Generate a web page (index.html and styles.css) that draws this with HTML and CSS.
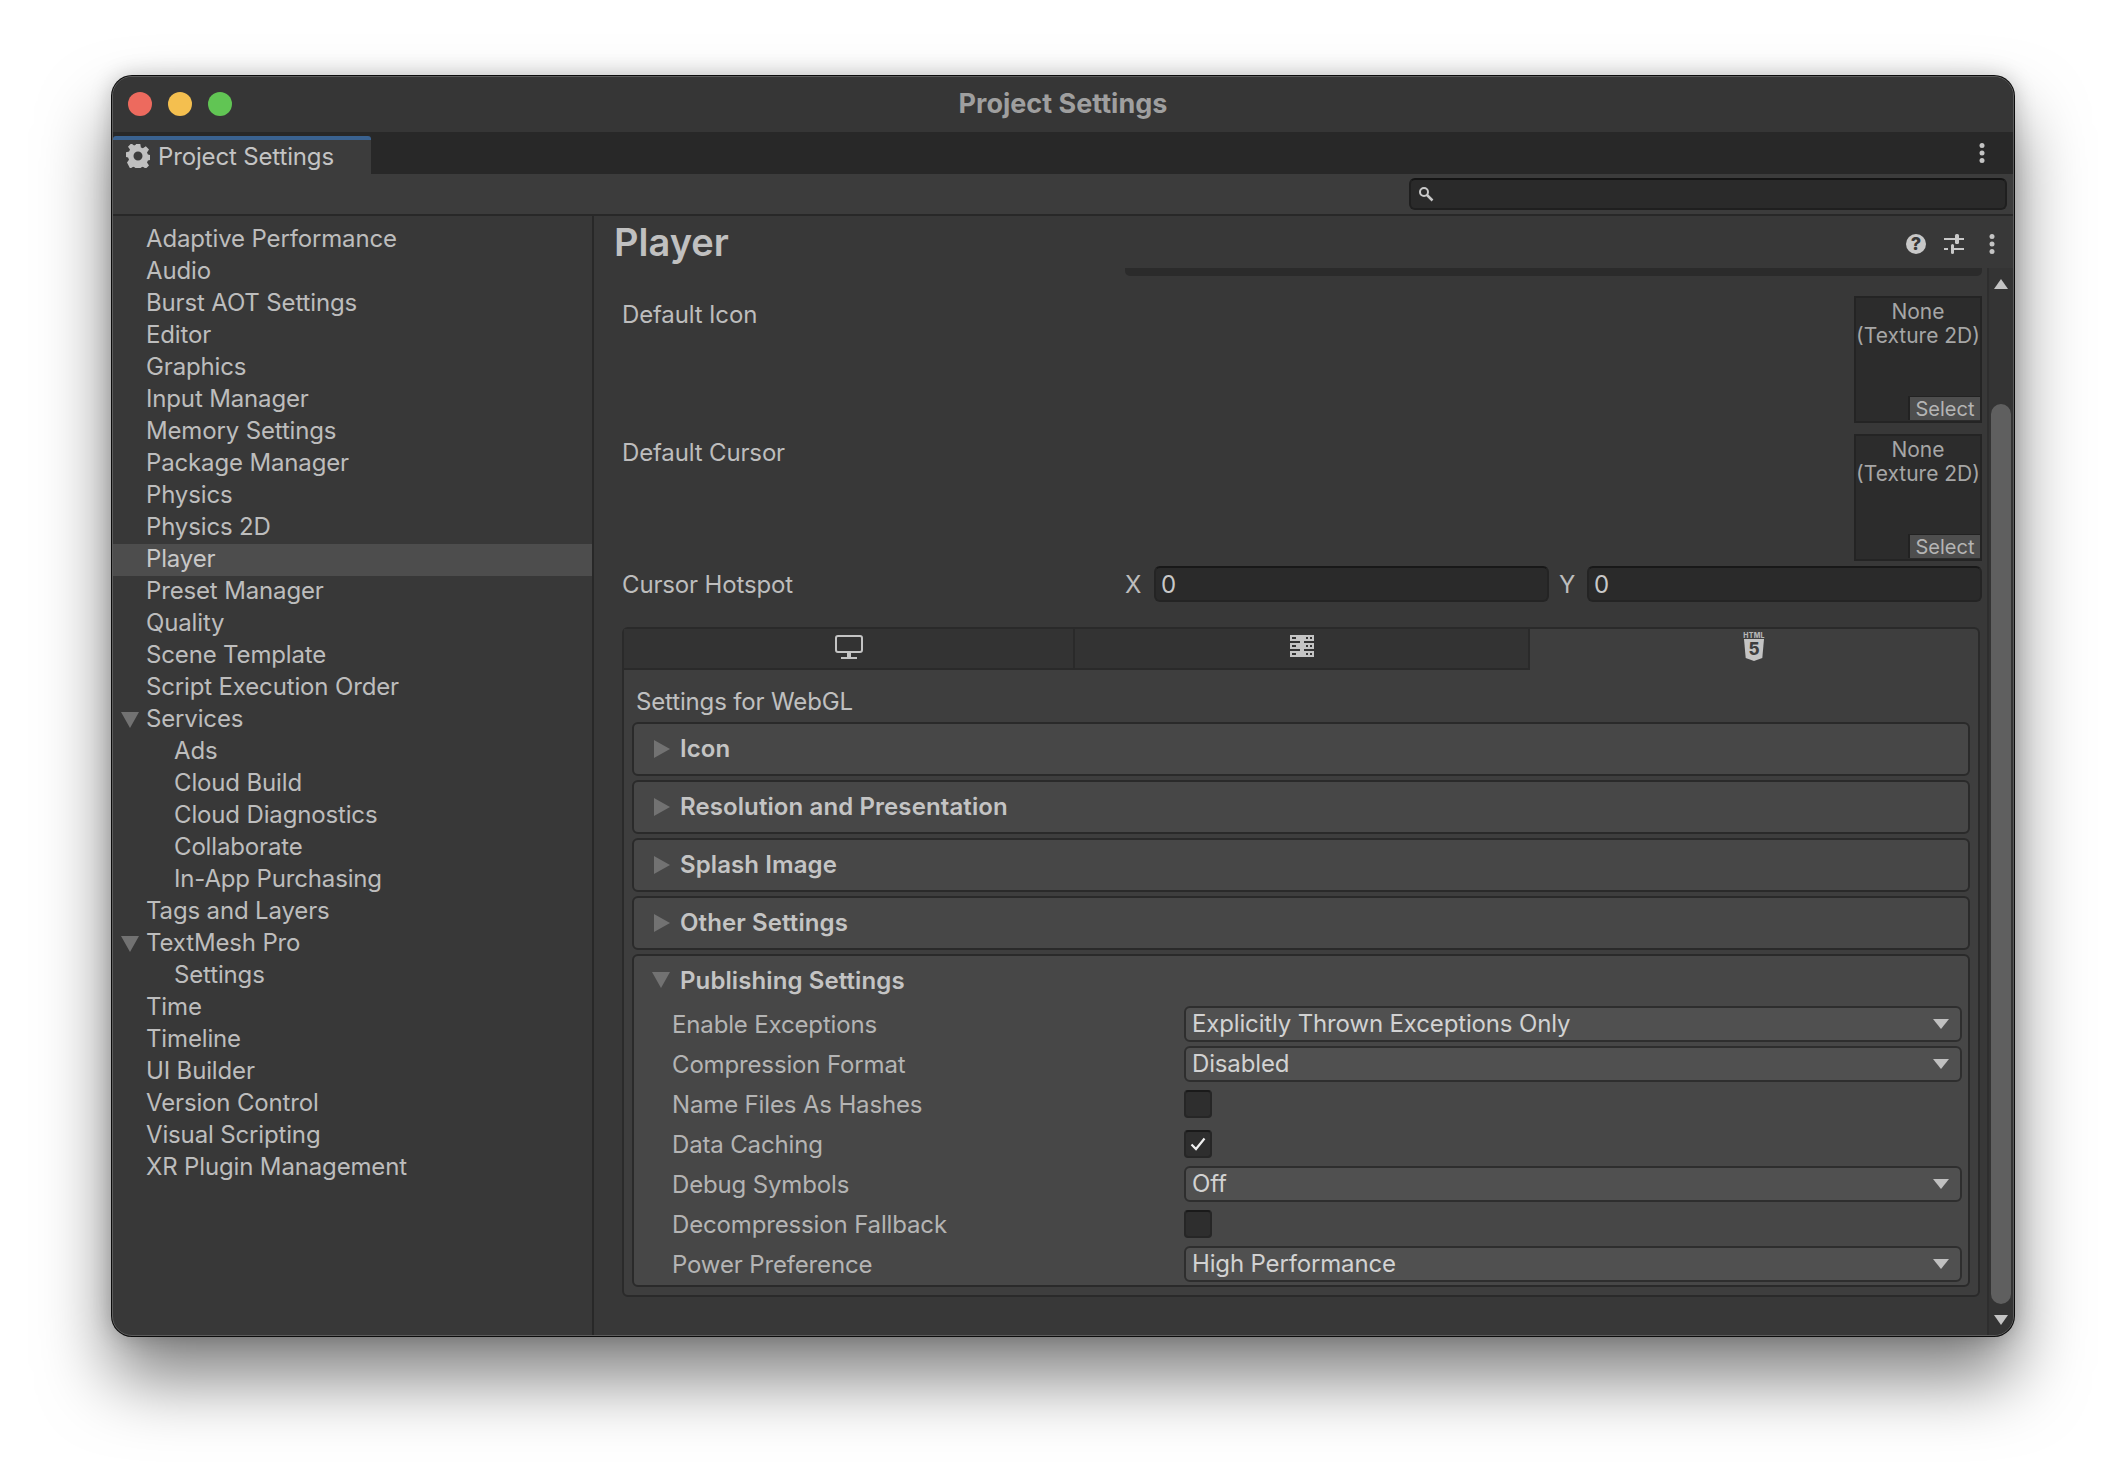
FILE: index.html
```html
<!DOCTYPE html>
<html lang="en">
<head>
  <meta charset="UTF-8" />
  <title>Project Settings</title>
  <link rel="stylesheet" href="styles.css">
</head>
<body>
  <div class="window">
    <div class="titlebar">
      <div class="lights">
        <span class="light red"></span>
        <span class="light yellow"></span>
        <span class="light green"></span>
      </div>
      <div class="title">Project Settings</div>
    </div>

    <div class="tabstrip">
      <div class="tab">
        <svg class="gear" viewBox="0 0 24 24"><path fill-rule="evenodd" d="M9.700 0h4.600l.6 3.400 2 .9 2.900-2 3.200 3.300-2 2.800.9 2.100 3.100.6v4.800l-3.100.6-.9 2.100 2 2.800-3.200 3.300-2.900-2-2 .9-.6 3.300H9.700l-.6-3.300-2-.9-2.900 2L1 18.500l2-2.800-.9-2.100-2.100-.6V8.200l3.100-.6.9-2.100-2-2.800 3.200-3.300 2.900 2 2-.9zM12 7.500a4.500 4.500 0 1 0 0 9 4.500 4.500 0 0 0 0-9z"/></svg>
        <span>Project Settings</span>
      </div>
      <svg class="dots" viewBox="0 0 6 20"><circle cx="3" cy="2.500" r="2.500"/><circle cx="3" cy="10" r="2.500"/><circle cx="3" cy="17.500" r="2.500"/></svg>
    </div>

    <div class="toolbar">
      <div class="search">
        <svg viewBox="0 0 16 16"><circle cx="6" cy="6" r="4" fill="none" stroke="#c8c8c8" stroke-width="2"/><path d="M9 9l5.500 5.500" stroke="#c8c8c8" stroke-width="2.500"/></svg>
      </div>
    </div>

    <div class="panes">
      <ul class="sidebar">
        <li>Adaptive Performance</li>
        <li>Audio</li>
        <li>Burst AOT Settings</li>
        <li>Editor</li>
        <li>Graphics</li>
        <li>Input Manager</li>
        <li>Memory Settings</li>
        <li>Package Manager</li>
        <li>Physics</li>
        <li>Physics 2D</li>
        <li class="selected">Player</li>
        <li>Preset Manager</li>
        <li>Quality</li>
        <li>Scene Template</li>
        <li>Script Execution Order</li>
        <li class="parent"><i class="tri-down"></i>Services</li>
        <li class="child">Ads</li>
        <li class="child">Cloud Build</li>
        <li class="child">Cloud Diagnostics</li>
        <li class="child">Collaborate</li>
        <li class="child">In-App Purchasing</li>
        <li>Tags and Layers</li>
        <li class="parent"><i class="tri-down"></i>TextMesh Pro</li>
        <li class="child">Settings</li>
        <li>Time</li>
        <li>Timeline</li>
        <li>UI Builder</li>
        <li>Version Control</li>
        <li>Visual Scripting</li>
        <li>XR Plugin Management</li>
      </ul>

      <div class="main">
        <div class="main-header">
          <h1>Player</h1>
          <div class="header-icons">
            <span class="help">?</span>
            <svg class="sliders" viewBox="0 0 20 20"><path d="M0 5h11M15 5h5M0 15h4M9 15h11" stroke="#c8c8c8" stroke-width="2"/><rect x="11" y="0" width="4" height="10" rx="1.500" fill="#c8c8c8"/><rect x="7" y="10" width="3" height="10" rx="1.500" fill="#c8c8c8"/></svg>
            <svg class="dots" viewBox="0 0 6 20"><circle cx="3" cy="2.500" r="2.500"/><circle cx="3" cy="10" r="2.500"/><circle cx="3" cy="17.500" r="2.500"/></svg>
          </div>
        </div>

        <div class="scroll-area">
          <div class="content">
            <div class="clipped"></div>

            <div class="texture-row first">
              <span class="label">Default Icon</span>
              <div class="texture">
                <span>None<br>(Texture 2D)</span>
                <button class="select">Select</button>
              </div>
            </div>
            <div class="texture-row">
              <span class="label">Default Cursor</span>
              <div class="texture">
                <span>None<br>(Texture 2D)</span>
                <button class="select">Select</button>
              </div>
            </div>

            <div class="hotspot">
              <span class="label">Cursor Hotspot</span>
              <div class="xy">
                <span class="axis">X</span>
                <div class="num">0</div>
                <span class="axis axis-y">Y</span>
                <div class="num">0</div>
              </div>
            </div>

            <div class="platforms">
              <div class="platform-tabs">
                <div class="ptab">
                  <svg width="28" height="24" viewBox="0 0 28 24"><rect x="1" y="1" width="26" height="16" rx="2" fill="none" stroke="#c4c4c4" stroke-width="2"/><rect x="12" y="18" width="4" height="4" fill="#c4c4c4"/><rect x="6" y="22" width="16" height="2" fill="#c4c4c4"/></svg>
                </div>
                <div class="ptab">
                  <svg width="24" height="22" viewBox="0 0 24 22"><path fill="#c4c4c4" d="M0 0h24v6H0zM0 8h24v6H0zM0 16h24v6H0zM10 6h4v2h-4zM10 14h4v2h-4z"/><path fill="#333" d="M2 2h4v2H2zM16 2h2v2h-2zM20 2h2v2h-2zM2 10h4v2H2zM16 10h2v2h-2zM20 10h2v2h-2zM2 18h4v2H2zM16 18h2v2h-2zM20 18h2v2h-2z"/></svg>
                </div>
                <div class="ptab active">
                  <svg width="22" height="30" viewBox="0 0 22 30"><text class="html-word" x="11" y="5.500">HTML</text><path fill="#c4c4c4" d="M1 7h20l-1.700 19L11 29l-8.300-3z"/><text class="html-five" x="11" y="23">5</text></svg>
                </div>
              </div>

              <div class="platform-body">
                <div class="settings-for">Settings for WebGL</div>
                <div class="foldout"><i class="tri-right"></i>Icon</div>
                <div class="foldout"><i class="tri-right"></i>Resolution and Presentation</div>
                <div class="foldout"><i class="tri-right"></i>Splash Image</div>
                <div class="foldout"><i class="tri-right"></i>Other Settings</div>

                <div class="publishing">
                  <div class="pub-title"><i class="tri-down"></i>Publishing Settings</div>
                  <div class="prop">
                    <span class="prop-label">Enable Exceptions</span>
                    <div class="dropdown">Explicitly Thrown Exceptions Only<i class="drop-arrow"></i></div>
                  </div>
                  <div class="prop">
                    <span class="prop-label">Compression Format</span>
                    <div class="dropdown">Disabled<i class="drop-arrow"></i></div>
                  </div>
                  <div class="prop">
                    <span class="prop-label">Name Files As Hashes</span>
                    <div class="checkbox"></div>
                  </div>
                  <div class="prop">
                    <span class="prop-label">Data Caching</span>
                    <div class="checkbox">
                      <svg width="16" height="14" viewBox="0 0 16 14"><path d="M1.500 7.500l4.500 4.500 8.500-10.500" fill="none" stroke="#f0f0f0" stroke-width="2.200"/></svg>
                    </div>
                  </div>
                  <div class="prop">
                    <span class="prop-label">Debug Symbols</span>
                    <div class="dropdown">Off<i class="drop-arrow"></i></div>
                  </div>
                  <div class="prop">
                    <span class="prop-label">Decompression Fallback</span>
                    <div class="checkbox"></div>
                  </div>
                  <div class="prop">
                    <span class="prop-label">Power Preference</span>
                    <div class="dropdown">High Performance<i class="drop-arrow"></i></div>
                  </div>
                </div>
              </div>
            </div>
          </div>

          <div class="scrollbar">
            <i class="arrow-up"></i>
            <div class="thumb"></div>
            <i class="arrow-down"></i>
          </div>
        </div>
      </div>
    </div>
  </div>
</body>
</html>
```

FILE: styles.css
```css
* {
  box-sizing: border-box;
}
html, body {
  height: 100%;
}
body {
  margin: 0;
  padding: 76px 0 0 112px;
  background: #fff;
  font-family: Inter, "Noto Sans", sans-serif;
  font-size: 24px;
  letter-spacing: -0.15px;
  color: #bdbdbd;
  overflow: hidden;
}
.window {
  width: 1902px;
  height: 1260px;
  display: flex;
  flex-direction: column;
  background: #383838;
  border: 1px solid #5c5c5c;
  border-radius: 20px;
  box-shadow: 0 0 0 1px #0c0c0c, 0 42px 70px rgba(0,0,0,0.5), 0 0 22px rgba(0,0,0,0.22);
  overflow: hidden;
}

/* title bar */
.titlebar {
  height: 55px;
  flex: none;
  display: flex;
  align-items: center;
  background: #363636;
  position: relative;
}
.lights {
  display: flex;
  gap: 16px;
  padding: 0 0 1px 15px;
}
.light {
  width: 24px;
  height: 24px;
  border-radius: 50%;
}
.red { background: #ed6a5e; }
.yellow { background: #f4bf4f; }
.green { background: #61c554; }
.title {
  position: absolute;
  left: 0;
  right: 0;
  padding-bottom: 3px;
  text-align: center;
  font-size: 27px;
  font-weight: 700;
  letter-spacing: 0;
  color: #9f9f9f;
}

/* tabs */
.tabstrip {
  height: 42px;
  flex: none;
  display: flex;
  align-items: flex-end;
  justify-content: space-between;
  background: #282828;
  padding-right: 28px;
}
.tab {
  width: 258px;
  height: 38px;
  display: flex;
  align-items: center;
  gap: 8px;
  padding: 0 0 2px 13px;
  background: #3c3c3c;
  border-top: 4px solid #3a6290;
  border-radius: 3px 3px 0 0;
  color: #c4c4c4;
}
.gear {
  width: 24px;
  height: 24px;
  fill: #c0c0c0;
}
.dots {
  width: 6px;
  height: 20px;
  fill: #c4c4c4;
}
.tabstrip .dots {
  align-self: center;
}

/* search */
.toolbar {
  height: 42px;
  flex: none;
  display: flex;
  justify-content: flex-end;
  padding: 4px 6px 0 0;
  background: #3c3c3c;
  border-bottom: 2px solid #282828;
}
.search {
  width: 598px;
  height: 32px;
  display: flex;
  align-items: center;
  padding-left: 7px;
  background: #2a2a2a;
  border: 2px solid #1f1f1f;
  border-top-color: #141414;
  border-radius: 6px;
}
.search svg {
  width: 16px;
  height: 16px;
}

/* left list */
.panes {
  flex: 1;
  min-height: 0;
  display: flex;
}
.sidebar {
  width: 481px;
  flex: none;
  margin: 0;
  padding: 8px 0 0;
  list-style: none;
  border-right: 2px solid #282828;
}
.sidebar li {
  height: 32px;
  line-height: 30px;
  padding-left: 33px;
  position: relative;
}
.sidebar .selected {
  background: #4d4d4d;
  color: #c8c8c8;
}
.sidebar .child {
  padding-left: 61px;
}
.parent .tri-down {
  position: absolute;
  left: 8px;
  top: 8px;
}
.tri-down {
  display: inline-block;
  width: 0;
  height: 0;
  border-left: 9px solid transparent;
  border-right: 9px solid transparent;
  border-top: 16px solid #727272;
}
.tri-right {
  display: inline-block;
  width: 0;
  height: 0;
  border-top: 9px solid transparent;
  border-bottom: 9px solid transparent;
  border-left: 16px solid #727272;
}

/* right side */
.main {
  flex: 1;
  min-width: 0;
  display: flex;
  flex-direction: column;
}
.main-header {
  height: 52px;
  flex: none;
  display: flex;
  justify-content: space-between;
  align-items: center;
  padding: 0 18px 0 20px;
}
.main-header h1 {
  margin: 0;
  font-size: 38px;
  font-weight: 600;
  letter-spacing: 0;
  color: #c0c0c0;
}
.header-icons {
  display: flex;
  align-items: center;
  padding-top: 3px;
}
.help {
  width: 20px;
  height: 20px;
  margin-right: 18px;
  border-radius: 50%;
  background: #c8c8c8;
  color: #383838;
  font-size: 18px;
  font-weight: 800;
  line-height: 20px;
  text-align: center;
}
.sliders {
  width: 20px;
  height: 20px;
  margin-right: 25px;
}
.scroll-area {
  flex: 1;
  min-height: 0;
  display: flex;
}
.content {
  flex: 1;
  min-width: 0;
  padding: 0 5px 0 28px;
}
.clipped {
  height: 8px;
  margin-left: 503px;
  background: #2b2b2b;
  border-radius: 0 0 5px 5px;
}
.label {
  color: #bdbdbd;
}
.texture-row {
  display: flex;
  justify-content: space-between;
  margin-top: 11px;
  line-height: 38px;
}
.texture-row.first {
  margin-top: 20px;
}
.texture {
  width: 128px;
  height: 127px;
  display: flex;
  flex-direction: column;
  justify-content: space-between;
  padding: 2px 0 1px;
  background: #2c2c2c;
  border: 2px solid #242424;
  font-size: 21px;
  letter-spacing: 0;
  line-height: 24px;
  text-align: center;
  color: #a6a6a6;
  white-space: nowrap;
}
.select {
  align-self: flex-end;
  width: 72px;
  height: 24px;
  padding: 1px 0 0;
  border: 0;
  border-top: 1px solid #222;
  border-left: 2px solid #222;
  background: #4e4e4e;
  color: #b4b4b4;
  font: inherit;
  font-size: 20px;
  line-height: 22px;
}
.hotspot {
  display: flex;
  justify-content: space-between;
  align-items: center;
  height: 36px;
  margin-top: 5px;
}
.xy {
  width: 857px;
  display: flex;
  align-items: center;
}
.axis {
  width: 29px;
  flex: none;
}
.axis-y {
  width: 33px;
  margin-left: 5px;
  padding-left: 5px;
}
.num {
  flex: 1;
  height: 36px;
  line-height: 33px;
  padding-left: 5px;
  background: #2a2a2a;
  border: 2px solid #242424;
  border-top-color: #181818;
  border-radius: 6px;
  color: #c8c8c8;
}

/* platform tabs */
.platforms {
  width: 1358px;
  height: 670px;
  margin-top: 25px;
  background: #3e3e3e;
  border: 2px solid #2a2a2a;
  border-radius: 6px;
}
.platform-tabs {
  display: grid;
  grid-template-columns: 451px 455px 1fr;
  height: 41px;
}
.ptab {
  display: flex;
  justify-content: center;
  padding-top: 6px;
  background: #333;
  border-right: 2px solid #2a2a2a;
  border-bottom: 2px solid #2a2a2a;
}
.ptab.active {
  background: transparent;
  border: 0;
  padding-top: 3px;
}
.html-word {
  font-size: 7px;
  font-weight: 800;
  text-anchor: middle;
  fill: #b4b4b4;
  letter-spacing: 0.2px;
}
.html-five {
  font-size: 17px;
  font-weight: 800;
  text-anchor: middle;
  fill: #3e3e3e;
}
.platform-body {
  padding: 0 8px;
}
.settings-for {
  height: 52px;
  line-height: 63px;
  padding-left: 4px;
  color: #c0c0c0;
}
.foldout {
  height: 54px;
  margin-bottom: 4px;
  display: flex;
  align-items: center;
  gap: 10px;
  padding: 0 0 1px 20px;
  background: #474747;
  border: 2px solid #2a2a2a;
  border-radius: 6px;
  font-weight: 600;
  letter-spacing: 0.1px;
  color: #c4c4c4;
}
.publishing {
  height: 333px;
  background: #474747;
  border: 2px solid #2a2a2a;
  border-radius: 6px;
  margin-top: 1px;
}
.pub-title {
  height: 48px;
  display: flex;
  align-items: center;
  gap: 10px;
  padding-left: 18px;
  font-weight: 600;
  letter-spacing: 0.1px;
  color: #c4c4c4;
}
.prop {
  height: 40px;
  display: flex;
  align-items: center;
  padding: 0 6px 0 38px;
}
.prop-label {
  width: 512px;
  flex: none;
  color: #b4b4b4;
}
.dropdown {
  flex: 1;
  height: 36px;
  display: flex;
  align-items: center;
  justify-content: space-between;
  padding: 0 11px 1px 6px;
  background: #505050;
  border: 2px solid #2e2e2e;
  border-radius: 6px;
  color: #d2d2d2;
}
.drop-arrow {
  width: 0;
  height: 0;
  border-left: 8px solid transparent;
  border-right: 8px solid transparent;
  border-top: 10px solid #c0c0c0;
}
.checkbox {
  width: 28px;
  height: 28px;
  display: flex;
  align-items: center;
  justify-content: center;
  background: #2e2e2e;
  border: 2px solid #262626;
  border-top-color: #1a1a1a;
  border-radius: 4px;
}

/* scrollbar */
.scrollbar {
  width: 26px;
  flex: none;
  display: flex;
  flex-direction: column;
  align-items: center;
  background: #343434;
  border-left: 2px solid #2e2e2e;
}
.arrow-up, .arrow-down {
  width: 0;
  height: 0;
  border-left: 7px solid transparent;
  border-right: 7px solid transparent;
}
.arrow-up {
  margin-top: 11px;
  border-bottom: 10px solid #c4c4c4;
}
.arrow-down {
  margin-top: 11px;
  border-top: 10px solid #c4c4c4;
}
.thumb {
  width: 20px;
  height: 900px;
  margin-top: 115px;
  background: #5f5f5f;
  border-radius: 10px;
}
```
